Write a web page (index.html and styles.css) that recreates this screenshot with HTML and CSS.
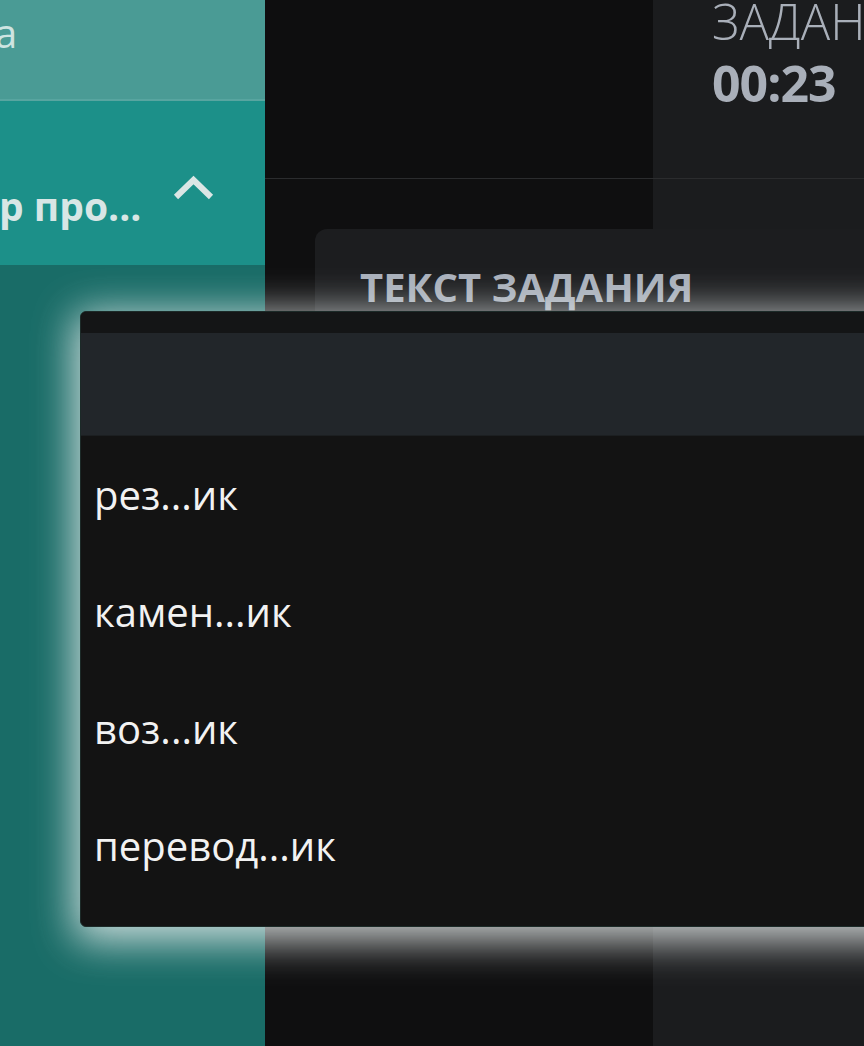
FILE: index.html
```html
<!DOCTYPE html>
<html lang="ru">
<head>
<meta charset="utf-8">
<title>Задание</title>
<link rel="stylesheet" href="styles.css">
</head>
<body>
<div class="app">
  <aside class="sidebar">
    <div class="side-top"><span class="side-top-text">а</span></div>
    <div class="side-sec">
      <span class="side-sec-text">р про...</span>
      <svg class="chevron" width="44" height="28" viewBox="0 0 44 28" aria-hidden="true">
        <path d="M4 22 L21.5 5 L39 22" fill="none" stroke="#dbe6e5" stroke-width="6" stroke-linejoin="miter"/>
      </svg>
    </div>
    <div class="side-rest"></div>
  </aside>
  <main class="main">
    <header class="header">
      <div class="header-left"></div>
      <div class="timer">
        <div class="timer-label">ЗАДАНИЕ</div>
        <div class="timer-value">00:23</div>
      </div>
    </header>
    <section class="card">
      <h2 class="card-title">ТЕКСТ ЗАДАНИЯ</h2>
    </section>
  </main>
</div>
<div class="modal">
  <div class="modal-top"></div>
  <div class="modal-head"></div>
  <ul class="modal-list">
    <li class="modal-item">рез...ик</li>
    <li class="modal-item">камен...ик</li>
    <li class="modal-item">воз...ик</li>
    <li class="modal-item">перевод...ик</li>
  </ul>
</div>
</body>
</html>
```

FILE: styles.css
```css
* { box-sizing: border-box; }

html, body {
  margin: 0;
  padding: 0;
}

body {
  width: 864px;
  height: 1046px;
  overflow: hidden;
  background: #0f0f10;
  font-family: "Open Sans", "Noto Sans", sans-serif;
  position: relative;
}

.app {
  display: grid;
  grid-template-columns: 265px 1fr;
  height: 1046px;
}

/* Sidebar */
.sidebar {
  display: flex;
  flex-direction: column;
  background: #196c67;
  overflow: hidden;
}

.side-top {
  height: 101px;
  background: #4a9b95;
  border-bottom: 2px solid #58a5a0;
  padding-top: 9px;
}

.side-top-text {
  display: block;
  margin-left: -5px;
  font-size: 40px;
  line-height: 48px;
  color: #cfe4e1;
}

.side-sec {
  height: 164px;
  background: #1c9089;
  display: flex;
  align-items: flex-start;
  padding-top: 74px;
}

.side-sec-text {
  margin-left: -1px;
  margin-top: 8px;
  font-size: 39px;
  line-height: 46px;
  font-weight: 700;
  color: #d8e6e5;
  white-space: nowrap;
}

.chevron {
  margin-left: 31px;
  flex: none;
}

.side-rest {
  flex: 1;
}

/* Main */
.main {
  display: flex;
  flex-direction: column;
  align-items: stretch;
  background: linear-gradient(to right, #0f0f10 388px, #1b1c1e 388px);
  overflow: hidden;
}

.header {
  height: 179px;
  flex: none;
  display: flex;
  border-bottom: 1px solid #2b2c2e;
  background: linear-gradient(to right, #0e0e0f 388px, transparent 388px);
}

.header-left {
  width: 388px;
  flex: none;
}

.timer {
  flex: 1;
  padding-left: 59px;
  white-space: nowrap;
  color: #a9afb9;
}

.timer-label {
  margin-top: -10px;
  font-size: 49px;
  line-height: 62px;
  font-weight: 300;
}

.timer-value {
  font-size: 50px;
  line-height: 62px;
  font-weight: 700;
  letter-spacing: -1px;
}

.card {
  flex: none;
  height: 620px;
  margin: 50px 0 0 50px;
  background: #1c1d1f;
  border-radius: 12px 0 0 0;
  padding: 34px 45px;
}

.card-title {
  margin: 0;
  font-size: 40px;
  line-height: 48px;
  font-weight: 700;
  color: #a9b0bb;
  white-space: nowrap;
}

/* Modal */
.modal {
  position: absolute;
  left: 80px;
  top: 311px;
  width: 840px;
  height: 616px;
  background: #131313;
  border: 1px solid #1c2a28;
  border-radius: 6px;
  box-shadow: 0 8px 40px 6px rgba(235, 240, 240, 0.85);
  overflow: hidden;
}

.modal-top {
  height: 21px;
  background: #141516;
}

.modal-head {
  height: 103px;
  background: #22262a;
  border-bottom: 1px solid #1c1f21;
}

.modal-list {
  list-style: none;
  margin: 0;
  padding: 0;
}

.modal-item {
  height: 117px;
  display: flex;
  align-items: center;
  padding-left: 13px;
  font-size: 40px;
  color: #f2f2f2;
  white-space: nowrap;
}
```
